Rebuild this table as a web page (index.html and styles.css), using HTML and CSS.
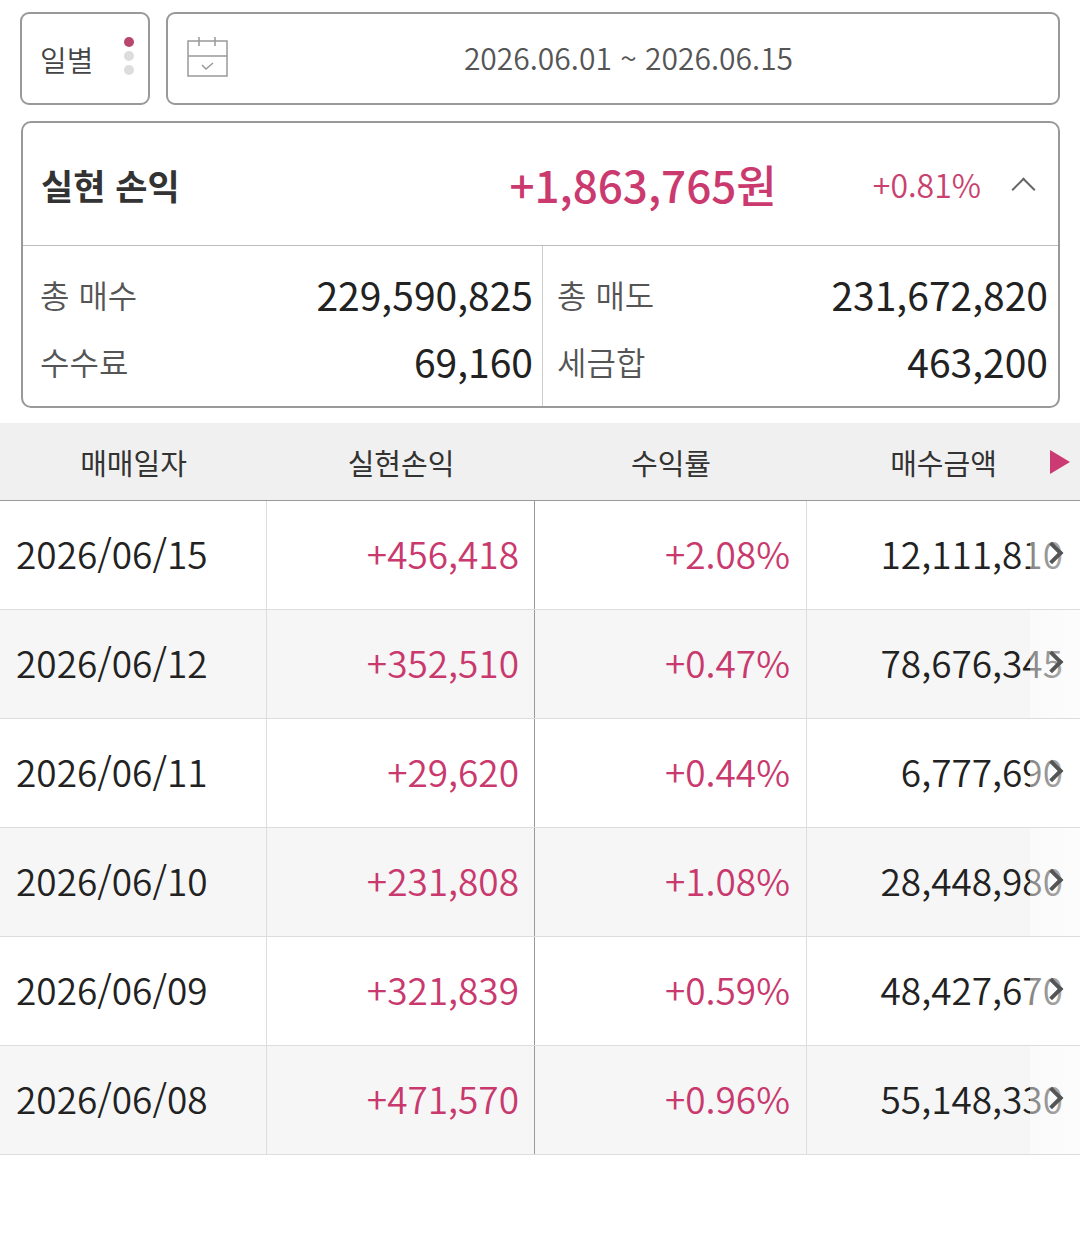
FILE: index.html
```html
<!DOCTYPE html>
<html lang="ko">
<head>
<meta charset="utf-8">
<link rel="stylesheet" href="styles.css">
</head>
<body>
<div class="topbar">
  <div class="period">
    <span class="period-label">일별</span>
    <span class="dots"><i class="dot on"></i><i class="dot"></i><i class="dot"></i></span>
  </div>
  <div class="range">
    <svg class="cal" width="42" height="42" viewBox="0 0 42 42">
      <rect x="1" y="5" width="39" height="35" fill="none" stroke="#999" stroke-width="1.5"/>
      <line x1="1" y1="20" x2="40" y2="20" stroke="#999" stroke-width="1.5"/>
      <line x1="12" y1="1" x2="12" y2="10" stroke="#999" stroke-width="1.5"/>
      <line x1="28" y1="1" x2="28" y2="10" stroke="#999" stroke-width="1.5"/>
      <polyline points="15,29 19,33 26,27" fill="none" stroke="#999" stroke-width="1.5"/>
    </svg>
    <span class="range-text">2026.06.01 ~ 2026.06.15</span>
  </div>
</div>

<div class="card">
  <div class="card-head">
    <span class="card-title">실현 손익</span>
    <span class="card-value">+1,863,765원</span>
    <span class="card-rate">+0.81%</span>
    <span class="caret"></span>
  </div>
  <div class="card-body">
    <div class="card-col">
      <div class="kv"><span class="k">총 매수</span><span class="v">229,590,825</span></div>
      <div class="kv"><span class="k">수수료</span><span class="v">69,160</span></div>
    </div>
    <div class="card-col right">
      <div class="kv"><span class="k">총 매도</span><span class="v">231,672,820</span></div>
      <div class="kv"><span class="k">세금합</span><span class="v">463,200</span></div>
    </div>
  </div>
</div>

<div class="table">
  <div class="thead">
    <div class="th">매매일자</div>
    <div class="th">실현손익</div>
    <div class="th">수익률</div>
    <div class="th">매수금액</div>
    <span class="more"></span>
  </div>
  <div class="tr">
    <div class="td date">2026/06/15</div>
    <div class="td num pos">+456,418</div>
    <div class="td num pos strong">+2.08%</div>
    <div class="td num last">12,111,810</div>
  </div>
  <div class="tr alt">
    <div class="td date">2026/06/12</div>
    <div class="td num pos">+352,510</div>
    <div class="td num pos strong">+0.47%</div>
    <div class="td num last">78,676,345</div>
  </div>
  <div class="tr">
    <div class="td date">2026/06/11</div>
    <div class="td num pos">+29,620</div>
    <div class="td num pos strong">+0.44%</div>
    <div class="td num last">6,777,690</div>
  </div>
  <div class="tr alt">
    <div class="td date">2026/06/10</div>
    <div class="td num pos">+231,808</div>
    <div class="td num pos strong">+1.08%</div>
    <div class="td num last">28,448,980</div>
  </div>
  <div class="tr">
    <div class="td date">2026/06/09</div>
    <div class="td num pos">+321,839</div>
    <div class="td num pos strong">+0.59%</div>
    <div class="td num last">48,427,670</div>
  </div>
  <div class="tr alt">
    <div class="td date">2026/06/08</div>
    <div class="td num pos">+471,570</div>
    <div class="td num pos strong">+0.96%</div>
    <div class="td num last">55,148,330</div>
  </div>
</div>
</body>
</html>
```

FILE: styles.css
```css
* { box-sizing: border-box; }
html, body { margin: 0; padding: 0; background: #fff; }
body {
  width: 1080px;
  font-family: "Noto Sans CJK KR", "Noto Sans", sans-serif;
  font-weight: 350;
  color: #222;
  overflow: hidden;
}

.topbar {
  display: flex;
  gap: 16px;
  padding: 12px 20px 0 20px;
  height: 105px;
}
.period {
  width: 130px;
  height: 93px;
  border: 2px solid #999;
  border-radius: 9px;
  display: flex;
  align-items: center;
  padding-left: 18px;
  gap: 31px;
}
.period-label { font-size: 29px; color: #444; }
.dots { display: flex; flex-direction: column; gap: 4px; margin-top: -6px; }
.dot { display: block; width: 10px; height: 10px; border-radius: 50%; background: #ddd; }
.dot.on { background: #b8466e; }

.range {
  flex: 1;
  height: 93px;
  border: 2px solid #999;
  border-radius: 9px;
  display: flex;
  align-items: center;
  padding-left: 19px;
}
.cal { flex: none; margin-top: -4px; }
.range-text {
  flex: 1;
  text-align: center;
  font-size: 30px;
  color: #555;
  padding-right: 30px;
  margin-top: -4px;
}

.card {
  margin: 16px 20px 0 21px;
  border: 2px solid #999;
  border-radius: 10px;
  height: 287px;
  display: flex;
  flex-direction: column;
}
.card-head {
  height: 123px;
  display: flex;
  align-items: center;
  padding: 0 26px 0 18px;
  border-bottom: 1px solid #bbb;
}
.card-title { font-size: 35px; font-weight: 700; color: #333; }
.card-value {
  margin-left: auto;
  font-size: 44px;
  font-weight: 500;
  color: #cb3a6f;
}
.card-rate {
  margin-left: 96px;
  font-size: 32px;
  color: #c9426f;
}
.caret {
  margin-left: 34px;
  width: 17px;
  height: 17px;
  border-left: 2px solid #666;
  border-top: 2px solid #666;
  transform: rotate(45deg);
  margin-top: 10px;
}
.card-body {
  flex: 1;
  display: grid;
  grid-template-columns: 519px 1fr;
}
.card-col {
  padding: 14px 9px 0 17px;
}
.card-col.right {
  border-left: 1px solid #ccc;
  padding: 14px 10px 0 14px;
}
.kv {
  height: 67px;
  display: flex;
  align-items: center;
  justify-content: space-between;
}
.k { font-size: 32px; color: #555; }
.v { font-size: 39px; color: #222; font-weight: 400; }

.table { margin-top: 15px; width: 1080px; overflow: hidden; }
.thead, .tr {
  display: grid;
  grid-template-columns: 267px 268px 272px 273px;
  position: relative;
}
.thead {
  height: 78px;
  background: #f0f0f0;
  border-bottom: 1px solid #999;
}
.th {
  display: flex;
  align-items: center;
  justify-content: center;
  font-size: 29px;
  color: #333;
  font-weight: 400;
}
.more {
  position: absolute;
  right: 10px;
  top: 27px;
  width: 0;
  height: 0;
  border-top: 12px solid transparent;
  border-bottom: 12px solid transparent;
  border-left: 20px solid #cc3a73;
}
.tr {
  height: 109px;
  border-bottom: 1px solid #ddd;
  background: #fff;
}
.tr.alt { background: #f6f6f6; }
.td {
  display: flex;
  align-items: center;
  font-size: 37px;
  color: #222;
  border-right: 1px solid #ddd;
  white-space: nowrap;
  padding-bottom: 4px;
}
.td:nth-child(2) { border-right-color: #999; }
.td.date { padding-left: 16px; }
.td.num { justify-content: flex-end; padding-right: 15px; }
.td.strong { padding-right: 16px; }
.td.pos { color: #c9396e; }
.td.last {
  border-right: none;
  padding-right: 17px;
  position: relative;
  color: #222;
}
.td.last::after {
  content: "";
  position: absolute;
  right: 0;
  top: 0;
  bottom: 0;
  width: 50px;
  background: linear-gradient(to right, rgba(255,255,255,0.45), rgba(255,255,255,0.7));
}
.td.last::before {
  content: "";
  position: absolute;
  right: 20px;
  top: 50%;
  width: 12px;
  height: 12px;
  margin-top: -10px;
  border-right: 4px solid #555;
  border-top: 4px solid #555;
  transform: rotate(45deg);
  z-index: 2;
}
```
